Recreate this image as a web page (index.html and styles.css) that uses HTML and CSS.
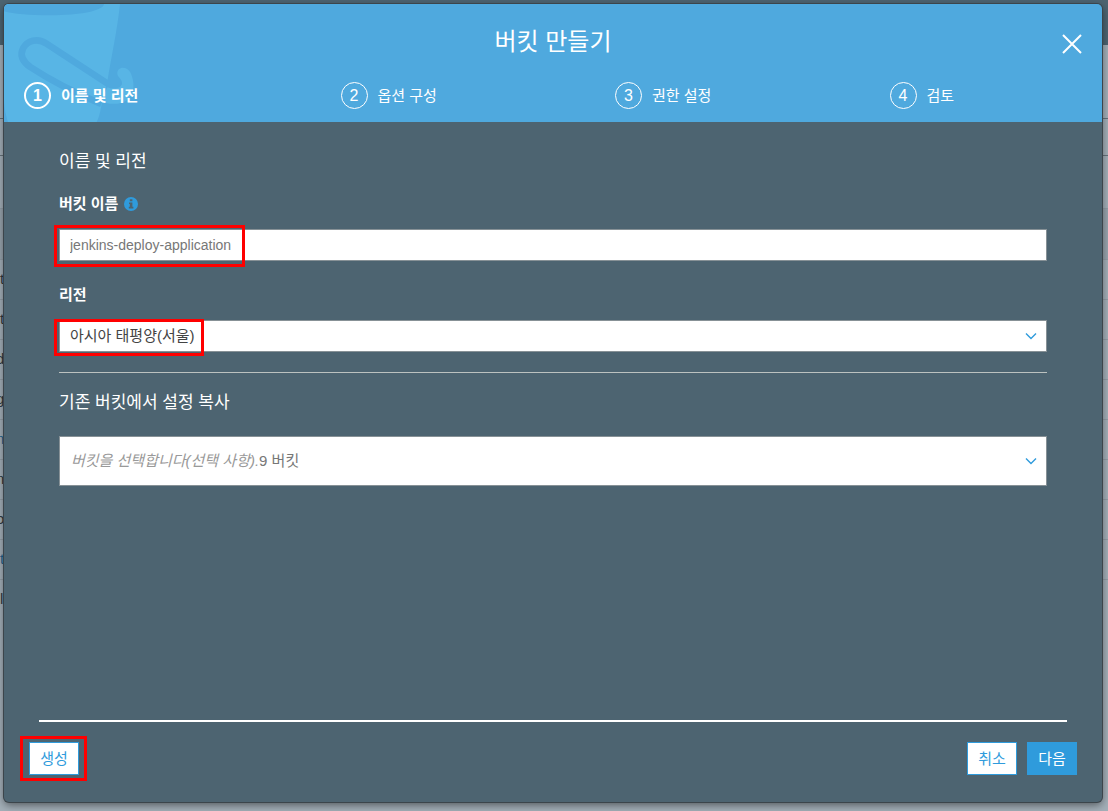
FILE: index.html
```html
<!DOCTYPE html>
<html lang="ko">
<head>
  <meta charset="UTF-8">
  <meta name="viewport" content="width=device-width, initial-scale=1">
  <title>버킷 만들기</title>
  <link rel="stylesheet" href="styles.css">
</head>
<body>
  <!-- Bucket list behind the dialog -->
  <div class="backdrop" aria-hidden="true">
    <div class="backdrop-nav"></div>
    <div class="backdrop-row tall"></div>
    <div class="backdrop-row head"></div>
    <div class="backdrop-row filter"></div>
    <div class="backdrop-row space"></div>
    <div class="backdrop-row">t</div>
    <div class="backdrop-row">t</div>
    <div class="backdrop-row cut">d</div>
    <div class="backdrop-row cut">g</div>
    <div class="backdrop-row cut link">n</div>
    <div class="backdrop-row cut">n</div>
    <div class="backdrop-row cut">o</div>
    <div class="backdrop-row link">ta</div>
    <div class="backdrop-row last">l</div>
  </div>

  <form class="modal" role="dialog" aria-labelledby="modalTitle">
    <header class="modal-header">
      <svg class="bucket" viewBox="12 12 400 354" aria-hidden="true">
        <path class="bucket-light" d="M12 12H360C352 90 334 170 322 245L304 318C300 340 297 352 290 366H24C18 345 14 330 12 300Z"/>
        <path class="bucket-dark" d="M12 12H312C310 32 240 46 150 46C90 46 40 42 12 34Z"/>
        <path class="bucket-light" d="M352 222C350 198 381 197 391 217C404 245 406 280 383 299C360 316 330 313 302 306L322 262C345 272 378 262 362 238C358 232 353 229 352 222Z"/>
        <path class="bucket-handle" d="M328 254L140 131C112 112 82 122 69 145C57 170 72 188 92 202C150 240 220 277 304 312"/>
      </svg>
      <h1 id="modalTitle">버킷 만들기</h1>
      <button type="button" class="close-btn" aria-label="닫기">
        <svg viewBox="0 0 20 20" width="20" height="20"><path d="M1 1L19 19M19 1L1 19"/></svg>
      </button>
      <ol class="steps">
        <li class="step active"><span class="step-num">1</span>이름 및 리전</li>
        <li class="step"><span class="step-num">2</span>옵션 구성</li>
        <li class="step"><span class="step-num">3</span>권한 설정</li>
        <li class="step"><span class="step-num">4</span>검토</li>
      </ol>
    </header>

    <main class="modal-body">
      <h2>이름 및 리전</h2>
      <div class="label-row">
        <label for="bucketName">버킷 이름</label>
        <svg class="info" viewBox="0 0 14 14" width="14" height="14" aria-hidden="true">
          <circle cx="7" cy="7" r="7"/>
          <path d="M5.8 2.3h2.6v2H5.8zM5 5.4h3.4v4.4h1v1.6H4.8V9.8h1V7H5z"/>
        </svg>
      </div>
      <div class="field name-field">
        <input id="bucketName" class="control" type="text" value="jenkins-deploy-application">
        <span class="mark"></span>
      </div>

      <div class="label-row region-label">
        <label for="region">리전</label>
      </div>
      <div class="field region-field">
        <select id="region" class="control">
          <option>아시아 태평양(서울)</option>
        </select>
        <svg class="chevron" viewBox="0 0 12 8" width="12" height="8"><path d="M1 1.5L6 6.5L11 1.5"/></svg>
        <span class="mark"></span>
      </div>

      <hr>
      <h2 id="copyTitle">기존 버킷에서 설정 복사</h2>
      <div class="field copy-field">
        <select id="copyFrom" class="control" aria-labelledby="copyTitle copyHint">
          <option value=""></option>
        </select>
        <span id="copyHint" class="hint"><i>버킷을 선택합니다(선택 사항).</i>9 버킷</span>
        <svg class="chevron" viewBox="0 0 12 8" width="12" height="8"><path d="M1 1.5L6 6.5L11 1.5"/></svg>
      </div>
    </main>

    <footer class="modal-footer">
      <div class="actions">
        <div class="create">
          <button type="submit" class="btn">생성</button>
          <span class="mark"></span>
        </div>
        <button type="button" class="btn">취소</button>
        <button type="button" class="btn primary">다음</button>
      </div>
    </footer>
  </form>
</body>
</html>
```

FILE: styles.css
```css
* { box-sizing: border-box; }
body { margin: 0; background: #a3afb8; font-family: "Liberation Sans", "Noto Sans CJK KR", sans-serif; font-size: 15px; line-height: 20px; color: #fff; }
h1, h2, ol { margin: 0; padding: 0; font-weight: normal; }
button, input, select { font: inherit; border-radius: 0; }

/* Page behind the dialog */
.backdrop { position: absolute; inset: 0; overflow: hidden; color: #2f3940; }
.backdrop-nav { height: 45px; background: #4d6471; }
.backdrop-row { height: 40px; padding: 9px 0; border-bottom: 1px solid #929da6; }
.backdrop-row.tall { height: 74px; border-color: #65717a; }
.backdrop-row.head { height: 37px; border-color: #65717a; }
.backdrop-row.filter { height: 53px; }
.backdrop-row.space { height: 51px; background: #98a4ad; }
.backdrop-row.cut { text-indent: -4px; }
.backdrop-row.link { color: #23618c; }
.backdrop-row.last { border: none; }

/* Dialog */
.modal { position: relative; display: flex; flex-direction: column; min-height: calc(100vh - 13px); margin: 4px 6px 9px 4px; background: #4d6471; border-radius: 5px; box-shadow: 0 0 0 1px #3c454b, 0 3px 8px rgba(0,0,0,0.5); }
.modal-header { position: relative; padding: 20px 0 13px; background: #4fa9de; border-radius: 5px 5px 0 0; overflow: hidden; }
.modal-header h1 { position: relative; margin-bottom: 22px; font-size: 24px; line-height: 36px; text-align: center; }
.bucket { position: absolute; left: 0; top: 0; height: 118px; }
.bucket-light { fill: #58b5e5; }
.bucket-dark { fill: #4fa9de; }
.bucket-handle { fill: none; stroke: #4fa9de; stroke-width: 20; }
.close-btn { position: absolute; top: 30px; right: 20px; width: 20px; height: 20px; padding: 0; border: none; background: none; cursor: pointer; }
.close-btn svg { display: block; fill: none; stroke: #fff; stroke-width: 2; }
.steps { position: relative; display: grid; grid-template-columns: repeat(4, 1fr); list-style: none; }
.step { display: flex; align-items: center; gap: 10px; padding-left: 62px; }
.step.active { padding-left: 20px; font-weight: bold; }
.step-num { display: flex; align-items: center; justify-content: center; width: 27px; height: 27px; border: 1px solid #fff; border-radius: 50%; font-size: 16px; }
.step.active .step-num { border-width: 2px; }

.modal-body { flex: 1; padding: 28px 55px; }
.modal-body h2 { font-size: 17px; line-height: 24px; }
.label-row { display: flex; align-items: center; gap: 6px; margin-top: 20px; margin-bottom: 15px; font-weight: bold; }
.region-label { margin-top: 24px; }
.info circle { fill: #2f9bdc; }
.info path { fill: #4d6471; }
.field { position: relative; display: grid; align-items: center; }
.field > * { grid-area: 1 / 1; }
.control { width: 100%; height: 32px; padding: 0 10px; border: 1px solid #879196; background: #fff; color: #444; appearance: none; outline: none; }
input.control { font-size: 14px; color: #777; }
.copy-field { margin-top: 21px; }
.copy-field .control { height: 50px; }
.hint { padding-left: 12px; color: #777; pointer-events: none; }
.hint i { color: #999; }
.chevron { justify-self: end; margin-right: 10px; fill: none; stroke: #2f9bdc; stroke-width: 1.4; pointer-events: none; }
hr { margin: 20px 0 18px; border: none; border-top: 1px solid #bcc2c0; }

/* Red boxes around the values to enter */
.mark { position: absolute; border: 3px solid #f00; pointer-events: none; }
.name-field .mark { left: -5px; top: -4px; width: 191px; height: 42px; }
.region-field .mark { left: -5px; top: -1px; width: 150px; height: 37px; }
.create .mark { inset: -6px -8px -6px -9px; }

.modal-footer { padding: 0 25px 27px; }
.modal-footer::before { content: ""; display: block; height: 2px; margin: 0 10px 20px; background: #fff; }
.actions { display: flex; gap: 10px; }
.create { position: relative; margin-right: auto; }
.btn { display: block; width: 50px; height: 33px; padding: 0; border: 1px solid #2f9bdc; background: #fff; color: #2f9bdc; cursor: pointer; }
.btn.primary { background: #2f9bdc; color: #fff; }
```
